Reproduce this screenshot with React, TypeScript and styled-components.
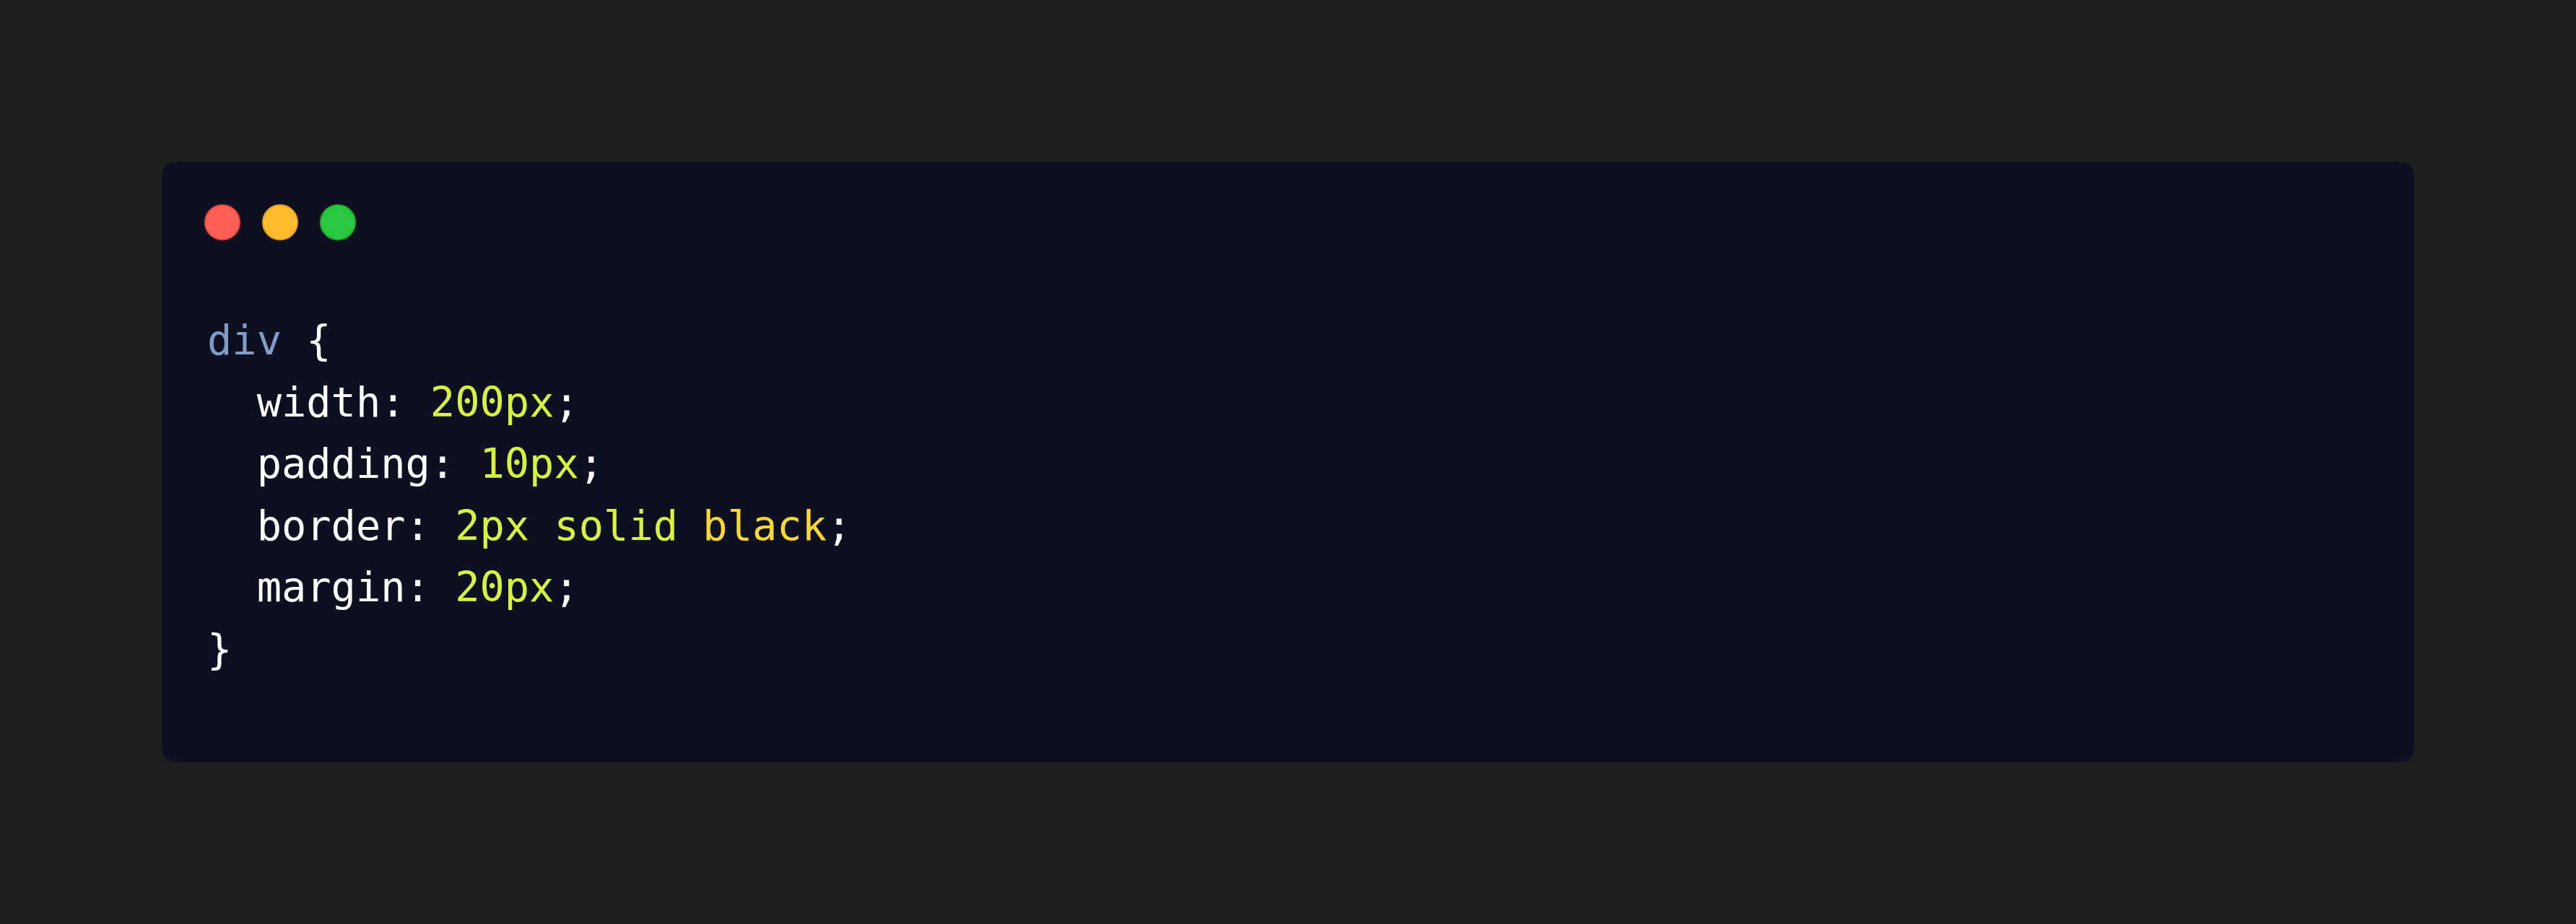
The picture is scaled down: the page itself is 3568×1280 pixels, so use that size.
import React from "react";
import styled, { createGlobalStyle } from "styled-components";

const GlobalStyle = createGlobalStyle`
  html, body {
    margin: 0;
    padding: 0;
    background: #1f1f1f;
  }
  body {
    font-family: "DejaVu Sans Mono", "Liberation Mono", monospace;
  }
`;

const Page = styled.div`
  min-height: 1280px;
  box-sizing: border-box;
  padding: 224px;
  background: #1f1f1f;
  display: flex;
  align-items: flex-start;
`;

const Window = styled.div`
  flex: 1;
  box-sizing: border-box;
  height: 832px;
  background: #0d1021;
  border-radius: 20px;
  padding: 59px 60px 0 59px;
  display: flex;
  flex-direction: column;
`;

const Dots = styled.div`
  display: flex;
  gap: 30px;
  height: 50px;
`;

const Dot = styled.span<{ $fill: string; $edge: string }>`
  width: 50px;
  height: 50px;
  box-sizing: border-box;
  border-radius: 50%;
  background: ${(p) => p.$fill};
  border: 2px solid ${(p) => p.$edge};
`;

const Code = styled.div`
  margin: 96px 0 0 4px;
  display: flex;
  flex-direction: column;
  font-family: "DejaVu Sans Mono", "Liberation Mono", monospace;
  font-size: 57px;
  line-height: 85.5px;
  color: #ffffff;
`;

const Line = styled.div<{ $indent?: boolean }>`
  white-space: pre;
  padding-left: ${(p) => (p.$indent ? "2ch" : "0")};
`;

const Sel = styled.span`
  color: #809dc8;
`;

const Val = styled.span<{ $gold?: boolean }>`
  color: ${(p) => (p.$gold ? "#fad82d" : "#d8f43a")};
`;

const props = [
  { name: "width", value: "200px" },
  { name: "padding", value: "10px" },
  { name: "border", value: "2px solid", extra: "black" },
  { name: "margin", value: "20px" },
];

export default function App() {
  return (
    <>
      <GlobalStyle />
      <Page>
        <Window>
          <Dots>
            <Dot $fill="#ff5f57" $edge="#e2463f" />
            <Dot $fill="#febc2e" $edge="#e0a225" />
            <Dot $fill="#28c840" $edge="#1eab2f" />
          </Dots>
          <Code>
            <Line>
              <Sel>div</Sel> {"{"}
            </Line>
            {props.map((p) => (
              <Line key={p.name} $indent>
                {p.name}: <Val>{p.value}</Val>
                {p.extra ? (
                  <>
                    {" "}
                    <Val $gold>{p.extra}</Val>
                  </>
                ) : null}
                ;
              </Line>
            ))}
            <Line>{"}"}</Line>
          </Code>
        </Window>
      </Page>
    </>
  );
}
